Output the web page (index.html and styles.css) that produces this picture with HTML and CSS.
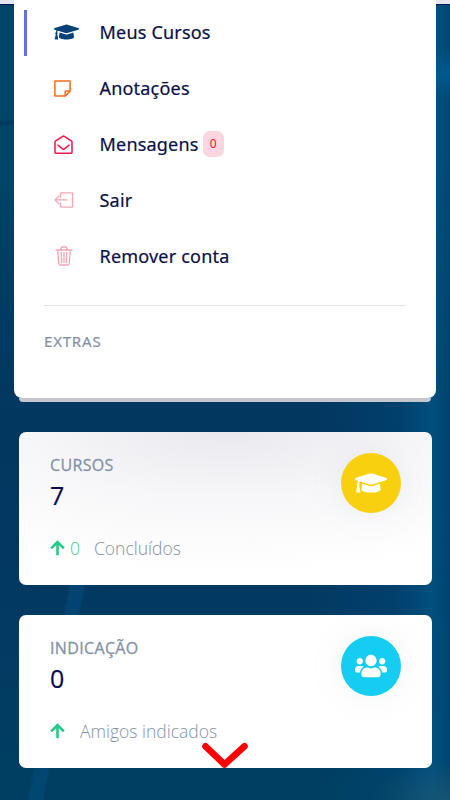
FILE: index.html
```
<!DOCTYPE html>
<html lang="pt-BR">
<head>
<meta charset="utf-8">
<meta name="viewport" content="width=device-width">
<title>Meus Cursos</title>
<link rel="stylesheet" href="styles.css">
</head>
<body>
<svg class="defs" aria-hidden="true">
  <symbol id="cap" viewBox="0 0 640 512"><path fill="currentColor" d="M622.34 153.2L343.4 67.5c-15.2-4.67-31.6-4.67-46.79 0L17.66 153.2c-23.54 7.23-23.54 38.36 0 45.59l48.63 14.94c-10.67 13.19-17.23 29.28-17.88 46.9C38.78 266.15 32 276.11 32 288c0 10.78 5.68 19.85 13.86 25.65L20.33 428.53C18.11 438.52 25.71 448 35.94 448h56.11c10.24 0 17.84-9.48 15.62-19.47L82.14 313.65C90.32 307.85 96 298.78 96 288c0-11.57-6.47-21.25-15.66-26.87.76-15.02 8.44-28.3 20.69-36.72L296.6 284.5c9.06 2.78 26.44 6.25 46.79 0l278.95-85.7c23.55-7.24 23.55-38.36 0-45.6zM352.79 315.09c-28.53 8.76-52.84 3.92-65.59 0l-145.02-44.55L128 384c0 35.35 85.96 64 192 64s192-28.65 192-64l-14.18-113.47-145.03 44.56z"/></symbol>
  <symbol id="up" viewBox="0 0 16 16"><path d="M8 15.800V2M1.200 8.400L8 1.600l6.800 6.800" fill="none" stroke="currentColor" stroke-width="2.700"/></symbol>
</svg>
<div class="page">
  <header class="topbar"></header>
  <nav class="menu">
    <ul class="menu-list">
      <li class="item active"><span class="icon"><svg class="cap-small"><use href="#cap"/></svg></span><span>Meus Cursos</span></li>
      <li class="item"><span class="icon note"><svg width="17" height="17" viewBox="0 0 17 17"><path d="M1.500.9h14q.6 0 .6.6v9.700L11.200 16.100H1.500q-.6 0-.6-.6V1.500q0-.6.6-.6zM16 11h-4.200q-.6 0-.6.6V16"/></svg></span><span>Anotações</span></li>
      <li class="item"><span class="icon mail"><svg width="19" height="19" viewBox="0 0 19 19"><path d="M1 17.600V7q0-.5.4-.8L8.700 1.300q.8-.5 1.600 0l7.300 4.900q.4.3.4.8v10.600q0 .6-.6.6H1.600q-.6 0-.6-.6zM4 10.200l4.500 3.600q1 .7 2 0l4.500-3.600"/></svg></span><span>Mensagens</span><span class="badge">0</span></li>
      <li class="item"><span class="icon faded"><svg width="20" height="16" viewBox="0 0 20 16"><path d="M6.500 5V1.500q0-.7.7-.7h10.600q.7 0 .7.7v12.900q0 .7-.7.7H7.200q-.7 0-.7-.7V11M13 7.900H1M5 3.900L1 7.900l4 4"/></svg></span><span>Sair</span></li>
      <li class="item"><span class="icon faded trash"><svg width="18" height="20" viewBox="0 0 18 20"><path d="M1 4h16M5.500 4l.8-2.300q.2-.7.8-.7h3.800q.6 0 .8.7L12.500 4M2.700 4l1 13.500q.2 1.500 1.500 1.500h7.600q1.300 0 1.500-1.500L15.300 4M6.200 6.500l.5 10M9 6.500v10M11.800 6.500l-.5 10"/></svg></span><span>Remover conta</span></li>
    </ul>
    <hr class="divider">
    <h6 class="extras">EXTRAS</h6>
  </nav>
  <div class="menu-edge"></div>
  <main class="cards">
    <section class="card shaded">
      <div class="card-head">
        <div><h5 class="label">CURSOS</h5><div class="value">7</div></div>
        <div class="round yellow"><svg class="cap-big"><use href="#cap"/></svg></div>
      </div>
      <p class="stat"><svg class="up"><use href="#up"/></svg><span class="count">0</span><span>Concluídos</span></p>
    </section>
    <section class="card">
      <div class="card-head">
        <div><h5 class="label">INDICAÇÃO</h5><div class="value">0</div></div>
        <div class="round cyan"><svg width="32" height="26" viewBox="0 0 640 512"><path fill="currentColor" d="M96 224c35.300 0 64-28.700 64-64s-28.700-64-64-64-64 28.700-64 64 28.700 64 64 64zm448 0c35.300 0 64-28.700 64-64s-28.700-64-64-64-64 28.700-64 64 28.700 64 64 64zm32 32h-64c-17.600 0-33.500 7.100-45.100 18.600 40.300 22.100 68.900 62 75.100 109.400h66c17.700 0 32-14.300 32-32v-32c0-35.300-28.700-64-64-64zm-256 0c61.900 0 112-50.100 112-112S381.900 32 320 32 208 82.100 208 144s50.100 112 112 112zm76.800 32h-8.300c-20.800 10-43.900 16-68.500 16s-47.600-6-68.500-16h-8.300C179.600 288 128 339.600 128 403.200V432c0 26.500 21.500 48 48 48h288c26.500 0 48-21.500 48-48v-28.800c0-63.600-51.600-115.200-115.200-115.200zm-223.700-13.400C161.500 263.100 145.600 256 128 256H64c-35.300 0-64 28.700-64 64v32c0 17.700 14.300 32 32 32h65.900c6.300-47.400 34.900-87.300 75.200-109.400z"/></svg></div>
      </div>
      <p class="stat friends"><svg class="up"><use href="#up"/></svg><span>Amigos indicados</span></p>
    </section>
  </main>
  <svg class="scroll-cue" width="48" height="28" viewBox="0 0 48 28"><path d="M4.500 4.300L23.500 22.500 43.500 4.300" fill="none" stroke="#f00" stroke-width="6.600" stroke-linecap="round" stroke-linejoin="round"/></svg>
</div>
</body>
</html>
```
FILE: styles.css
```
* { box-sizing: border-box; }
body { margin: 0; font-family: "Open Sans", sans-serif; color: #0a0f46; }
.defs { display: block; width: 0; height: 0; }
.page {
  position: relative;
  height: 800px;
  overflow: hidden;
  background:
    linear-gradient(101deg, transparent 16%, rgba(0,88,140,.35) 16.500%, rgba(0,88,140,.35) 19%, transparent 19.500%) -10px 585px / 450px 215px no-repeat,
    linear-gradient(175deg, transparent 46%, rgba(0,40,90,.5) 50%, transparent 55%) 0 82px / 30px 80px no-repeat,
    radial-gradient(ellipse 32px 26px at 448px 73px, rgba(0,92,150,.8), transparent),
    radial-gradient(ellipse 80px 40px at 450px 800px, rgba(40,90,115,.6), transparent),
    linear-gradient(90deg, transparent 70%, rgba(0,80,130,.3) 88%, rgba(0,88,138,.7) 96%, rgba(0,76,120,.55)),
    linear-gradient(180deg, #004469 0, #00466a 150px, #003c64 280px, #023760 430px, #023a63 640px, #003f62 800px);
}
.topbar { height: 5px; background: #e6e6ec; border-bottom: 1px solid #00195a; }
.menu {
  position: relative;
  height: 398px;
  margin: -5px 14px 0;
  padding: 5px 30px 0;
  background: #fff;
  border-radius: 0 0 8px 8px;
}
.menu-list { list-style: none; margin: 0; padding: 0; }
.item {
  display: flex;
  align-items: center;
  height: 56px;
  font: 400 18px/26px "Noto Sans", "Open Sans", sans-serif;
  letter-spacing: .2px;
  -webkit-text-stroke: .2px currentColor;
  color: #0a0f46;
}
.item.active { margin-left: -20px; height: 55px; background: linear-gradient(#6272d9, #6272d9) 0 5px / 3px 46px no-repeat; padding-left: 20px; }
.item.active > * { transform: translateY(-1px); }
.icon { width: 55.500px; padding-left: 9.500px; display: flex; flex: none; fill: none; stroke-width: 1.500; stroke-linejoin: round; stroke-linecap: round; }
.cap-small { width: 25px; height: 20px; color: #084279; stroke: none; }
.note { stroke: #ff691c; }
.mail { stroke: #f5164f; }
.faded { stroke: #f5a5b6; stroke-width: 1.300; }
.trash { padding-left: 10.500px; }
.badge {
  margin-left: 4px;
  width: 21px;
  height: 26px;
  border-radius: 7px;
  background: #fdd5df;
  color: #f5123f;
  font-size: 12px;
  letter-spacing: 0;
  -webkit-text-stroke: 0;
  text-align: center;
}
.divider { margin: 21px 0 0; border: 0; border-top: 1px solid #e2e3e8; }
.extras { margin: 25px 0 0; font: 400 15px/21px "Noto Sans", sans-serif; letter-spacing: .8px; -webkit-text-stroke: .2px currentColor; color: #8492a6; }
.menu-edge { height: 4px; margin: 0 19px; background: #c6c6cf; border-radius: 0 0 4px 4px; }
.cards { display: flex; flex-direction: column; gap: 30px; padding: 30px 18px 0 19px; }
.card { height: 153px; border-radius: 7px; background: #fff; padding: 20.500px 31px 0; overflow: hidden; }
.card.shaded { background: radial-gradient(ellipse 420px 145px at 50% -5px, #e9e8ee, #f7f7f9 50%, #fff); }
.card-head { display: flex; justify-content: space-between; height: 82.500px; }
.label { margin: 0; font: 400 16px/24px "Open Sans", sans-serif; letter-spacing: .35px; -webkit-text-stroke: .3px currentColor; color: #8492a6; }
.value { font: 400 25px/37px "Open Sans", sans-serif; -webkit-text-stroke: .2px currentColor; color: #08084e; }
.round { width: 60px; height: 60px; border-radius: 50%; display: flex; align-items: center; justify-content: center; color: #fff; box-shadow: 0 0 32px rgba(136,152,170,.13); }
.yellow { background: #f8d010; }
.cyan { background: #14cdf1; }
.cap-big { width: 32px; height: 26px; }
.stat { display: flex; align-items: center; margin: 0; font: 300 17.500px/26px "Open Sans", sans-serif; color: #8492a6; }
.up { width: 15px; height: 16px; margin-right: 5px; color: #20ca87; }
.count { color: #49c98a; margin-right: 14px; }
.friends .up { margin-right: 15px; }
.scroll-cue { position: absolute; left: 201px; top: 742px; }
```
